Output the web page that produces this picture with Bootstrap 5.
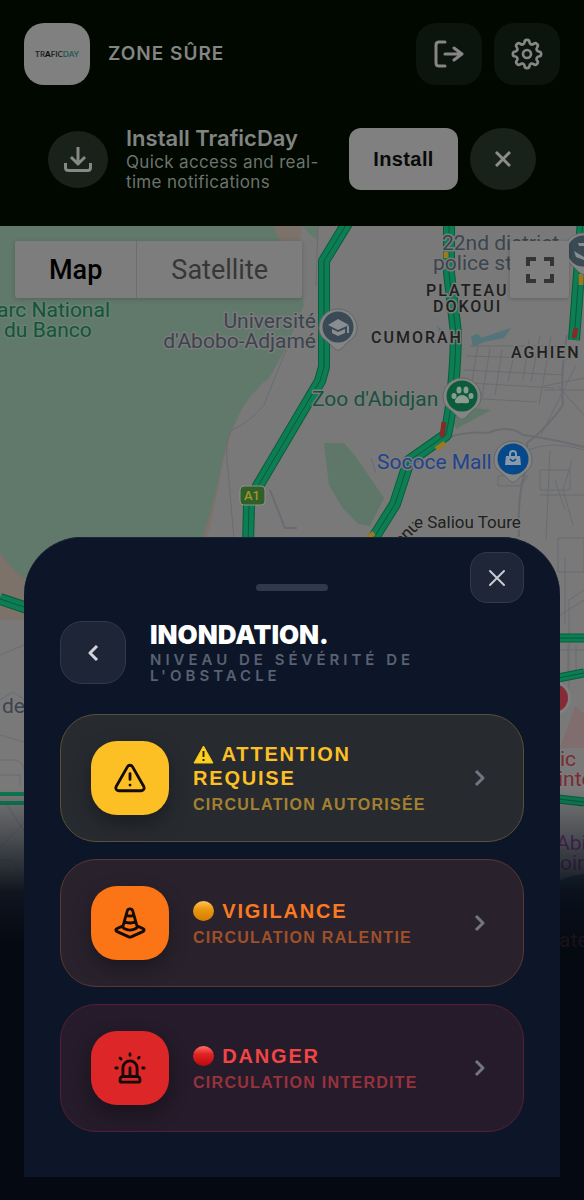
<!DOCTYPE html>
<html lang="fr">
<head>
<meta charset="utf-8">
<meta name="viewport" content="width=device-width, initial-scale=1">
<title>TraficDay</title>
<link href="https://cdn.jsdelivr.net/npm/bootstrap@5.3.0/dist/css/bootstrap.min.css" rel="stylesheet">
<style>
body{background:#050912;font-family:Inter,"Liberation Sans",sans-serif}
button{border:0;padding:0;flex-shrink:0}
svg{display:block;flex-shrink:0}
.stroke-icon{fill:none;stroke:currentColor;stroke-width:2;stroke-linecap:round;stroke-linejoin:round}
.stroke-bold{stroke-width:3}
.stroke-butt{stroke-width:3;stroke-linecap:butt}
.top-area{background:#000800;color:#858585;padding:23px 24px 34px}
.brand-row{gap:18px}
.brand-logo{width:66px;height:62px;border-radius:20px;background:#808080}
.zone-name{font-size:19px;font-weight:600;line-height:24px;letter-spacing:1px}
.top-btns{gap:12px}
.top-btn{width:66px;height:62px;border-radius:20px;background:#0c140e;color:#858685}
.install-row{padding:0 24px;margin-top:41px}
.install-copy{min-width:0;margin:0 18px}
.round-mark{width:60px;height:57px;border-radius:50%;background:#19211b;color:#858885;flex-shrink:0}
.install-title{font-size:22px;font-weight:600;line-height:24px;margin:0 0 2px;color:#828482}
.install-text{font-size:17px;line-height:20px;margin:0;color:#6d736e;letter-spacing:.02em}
.install-btn{width:109px;height:62px;border-radius:12px;background:#808080;color:#080a08;font:bold 20px "Liberation Sans",sans-serif;letter-spacing:.02em}
.dismiss-btn{width:66px;height:62px;margin-left:12px;border-radius:50%;background:#19211b;color:#8b8d8b}
.map-art{inset:0;width:100%;height:100%}
.map-art text{font-family:Roboto,sans-serif;paint-order:stroke;stroke:#7b7b7b;stroke-width:3px;stroke-linejoin:round}
.map-art .on-park text{stroke:#66816e}
.map-art .no-halo{stroke:none}
.map-tools{padding:15px 15px 0}
.map-types{height:57px;background:#7d7d7d;border-radius:2px;box-shadow:0 1px 5px #0003}
.map-types button{background:none;font:400 27px Roboto,sans-serif;color:#373737;padding:0 34px}
.map-types .current{font-weight:500;color:#000;border-right:1px solid #6d6d6d}
.full-btn{width:59px;height:57px;background:#7f7f7f;color:#343434;border-radius:2px;box-shadow:0 1px 4px #0003}
.sheet{margin:0 24px 23px;padding:47px 36px 45px;border-radius:58px 58px 0 0;background:#0c1628;box-shadow:inset 0 1px #1a2435}
.grip{width:72px;height:7px;border-radius:4px;background:#2e394b}
.close-btn{top:15px;right:36px;width:54px;height:51px;border-radius:17px;background:#1e2638;border:1px solid #313a4b;color:#c7cad1}
.sheet-head{gap:24px;margin:30px 0}
.back-btn{width:66px;height:63px;border-radius:22px;background:#1e2537;border:1px solid #303849;color:#d0d3da}
.sheet-title{font-size:26px;font-weight:900;line-height:28px;margin:0 0 3px;color:#fff}
.sheet-sub{font-size:15px;font-weight:600;line-height:16px;letter-spacing:4px;margin:0;color:#596172}
.levels{gap:17px}
.level{border:1px solid;border-radius:36px;padding:26px 32px 26px 30px;gap:24px;font-family:"Liberation Sans",sans-serif;font-weight:700}
.level-icon{width:78px;height:74px;border-radius:26px;color:#140b05;box-shadow:0 8px 20px #0005;flex-shrink:0}
.level-icon svg{stroke-width:2}
.level-name{font-size:20px;line-height:24px;letter-spacing:.09em}
.level-name svg{display:inline-block;vertical-align:-3px;margin-right:1px}
.level-note{font-size:16px;line-height:20px;letter-spacing:.08em;margin-top:5px}
.level>svg{color:#737580}
.caution{background:#272a2f;border-color:#575233}
.caution .level-icon{background:#fcbf24}.caution .level-name{color:#fcbf24}.caution .level-note{color:#a38030}
.vigilance{background:#29222d;border-color:#593831}
.vigilance .level-icon{background:#fb7415}.vigilance .level-name{color:#fb7a20}.vigilance .level-note{color:#9d5029}
.danger{background:#251b2a;border-color:#561f35}
.danger .level-icon{background:#dc2628}.danger .level-name{color:#f24545}.danger .level-note{color:#97323d}
</style>
</head>
<body>
<div class="min-vh-100 d-flex flex-column">
<header class="top-area">
  <div class="brand-row d-flex align-items-center">
    <div class="brand-logo d-flex align-items-center justify-content-center">
      <svg width="50" height="12" viewBox="0 0 50 12" font-family="Lato,sans-serif" font-size="8" font-weight="700"><text x="25" y="9" text-anchor="middle" fill="#222827">TR<tspan fill="#0b0b0b" font-weight="900">A</tspan>FIC<tspan fill="#285951">DAY</tspan></text></svg>
    </div>
    <div class="zone-name">ZONE SÛRE</div>
    <div class="top-btns d-flex ms-auto">
      <button class="top-btn d-flex align-items-center justify-content-center" aria-label="Log out"><svg class="stroke-icon stroke-bold" width="30" height="28" viewBox="0 0 30 28"><path d="M11 2H5Q2 2 2 5V23Q2 26 5 26H11M11 14H28M20 8l8 6-8 6"/></svg></button>
      <button class="top-btn d-flex align-items-center justify-content-center" aria-label="Settings"><svg class="stroke-icon" width="34" height="32" viewBox="-12 -12 24 24"><defs><path id="lobe" d="M-3.060-7.390C-2.300-7.700-1.900-8-1.900-8.700A1.900 1.900 0 0 1 1.900-8.700C1.900-8 2.300-7.700 3.060-7.390"/></defs><use href="#lobe"/><use href="#lobe" transform="rotate(45)"/><use href="#lobe" transform="rotate(90)"/><use href="#lobe" transform="rotate(135)"/><use href="#lobe" transform="rotate(180)"/><use href="#lobe" transform="rotate(225)"/><use href="#lobe" transform="rotate(270)"/><use href="#lobe" transform="rotate(315)"/><circle r="3"/></svg></button>
    </div>
  </div>
  <div class="install-row d-flex align-items-center">
    <div class="round-mark d-flex align-items-center justify-content-center"><svg class="stroke-icon stroke-butt" width="30" height="28" viewBox="0 0 30 28"><path d="M15 2V18M8 12l7 7 7-7M2.500 18V22.500Q2.500 25.500 5.500 25.500H24.500Q27.500 25.500 27.500 22.500V18"/></svg></div>
    <div class="install-copy flex-grow-1"><h2 class="install-title">Install TraficDay</h2><p class="install-text">Quick access and real-time notifications</p></div>
    <button class="install-btn">Install</button>
    <button class="dismiss-btn d-flex align-items-center justify-content-center" aria-label="Dismiss"><svg class="stroke-icon stroke-butt" width="16" height="16" viewBox="0 0 16 16"><path d="M1 1l14 14M15 1L1 15"/></svg></button>
  </div>
</header>
<main class="position-relative flex-grow-1 d-flex flex-column">
  <svg class="map-art position-absolute" viewBox="0 226 584 974" preserveAspectRatio="xMidYMin slice" aria-hidden="true">
    <defs>
      <linearGradient id="fade" x1="0" y1="0" x2="0" y2="1"><stop offset="0" stop-color="#050912" stop-opacity="0"/><stop offset=".3" stop-color="#08101a" stop-opacity=".45"/><stop offset=".6" stop-color="#070c17" stop-opacity=".92"/><stop offset=".9" stop-color="#050912"/></linearGradient>
      <g id="drop"><path d="M0-19a19 19 0 0 1 19 19c0 9-6 11-11 16l-5 5q-3 3-6 0l-5-5C-13 11-19 9-19 0A19 19 0 0 1 0-19z" fill="#838484" stroke="#646565" stroke-width="1"/></g>
    </defs>
    <rect y="226" width="584" height="974" fill="#797979"/>
    <path d="M0 226H302L286 350C265 375 245 395 235 425C222 450 218 500 207 537L190 620H0z" fill="#7c7269"/>
    <path d="M0 226H273Q288 256 300 280L304 305Q288 345 270 377Q240 400 226 445Q215 500 202 540L180 590H40Q10 570 0 552z" fill="#61796b"/>
    <path d="M302 226h16v14l-8-6z" fill="#627b6d"/>
    <path d="M324 443h20l12 14 28 41-14 28-12-2-16-17-13-22zM451 416l10-10 30 4-35 19z" fill="#5f7768"/>
    <path d="M471 337q7-6 10 1l30-10-7 10-20 4-11 5zM436 325l7 6v8z" fill="#54747c"/>
    <g fill="none" stroke="#6a6c72" stroke-width="2">
      <path stroke-width="1" d="M286 350L264 405Q248 424 231 430Q224 442 228 470L234 540"/><path d="M270 490l15 38h12"/>
      <path d="M449 437q20-6 39-4 20-9 35 2 30 4 61 12M567 335q-7 40-4 70-15 22-36 38v24q-10 24-8 70"/>
      <path stroke-width="1" d="M528 450q24-10 56 0M540 495h44M550 450l-4 90M572 460l-9 30 10 35M470 346h105M466 356l105 3M464 370l100 5M470 383l85 5M465 398l72 4M478 345l-9 55M490 348l-8 50M502 350l-7 45M516 346l-8 35M529 340l-6 40M540 336l-9 46M551 337l-12 68M576 365l-35 70M584 378l-40 8M584 390h-40M557 385l27 30M540 470h30v20h-30zM555 480l10 30M498 476h30l-8 10h-22z"/>
      <path stroke-width="1" d="M558 538h26v34h-26zM565 558v65M584 590l-15 10v100M560 615l24-15M560 650h24M568 645v30M576 645v34M371 458l5 15M318 226l-2 60"/>
      <path stroke-width="1" d="M0 655l24-10M0 700l13-8 11 7M0 735l24 7M0 760h16q8 3 8 10M0 775h20v10M7 805l17 26M24 823L0 847M0 860h13l8 20"/>
    </g>
    <path d="M575 706l9 8v34h-24z" fill="#806d6d"/>
    <path d="M560 880q12-5 24-6v100h-24z" fill="#314e5b"/>
    <g fill="none" stroke-linejoin="round">
      <g stroke="#075d3c" stroke-width="12"><path d="M349 220L324 261V367L320 381 258 486 249 505 248 545"/><path d="M449 220v53l7 60q-1 60-10 102L409 461l-14 43-25 40"/><path d="M583 220l-9 120"/><path d="M0 599l30 10"/><path d="M558 638h26M558 678l26-5M558 799l26 3" stroke-width="9"/></g>
      <g stroke="#0d7e54" stroke-width="10"><path d="M349 220L324 261V367L320 381 258 486 249 505 248 545"/><path d="M449 220v53l7 60q-1 60-10 102L409 461l-14 43-25 40"/><path d="M583 220l-9 120"/><path d="M0 599l30 10"/><path d="M558 638h26M558 678l26-5M558 799l26 3" stroke-width="7"/></g>
      <path d="M349 220L324 261V367L320 381 258 486 249 505 248 545M449 220v53l7 60q-1 60-10 102L409 461l-14 43-25 40M583 220l-9 120M0 599l30 10M558 638h26M558 678l26-5M558 799l26 3" stroke="#075a3d" stroke-width="1"/>
      <path d="M0 794h30M0 803h30" stroke="#0d7850" stroke-width="4"/>
      <path d="M444 422l-2 15M576 328l-2 10" stroke="#842b29" stroke-width="5"/><path d="M436 449l9-6M446 252v6M581 274v11M368 538l6-5" stroke="#9a7920" stroke-width="5"/>
    </g>
    <rect x="240" y="486" width="25" height="19" rx="4" fill="#315f27" stroke="#8c938a"/>
    <text class="no-halo" x="252" y="500" text-anchor="middle" font-size="13" font-weight="500" fill="#a2962e">A1</text>
    <g class="on-park" fill="#17523d" font-size="21"><text x="110" y="317" text-anchor="end">Parc National</text><text x="4" y="337">du Banco</text></g>
    <text x="312" y="406" font-size="21" fill="#17523d">Zoo d'Abidjan</text>
    <g fill="#3b444f" font-size="21"><text x="316" y="328" text-anchor="end">Université</text><text x="316" y="348" text-anchor="end">d'Abobo-Adjamé</text><text x="442" y="250">22nd district</text><text x="433" y="270">police station</text><text x="2" y="713">de</text></g>
    <text x="377" y="469" font-size="21" fill="#22438b">Sococe Mall</text>
    <g fill="#202020" font-size="16" font-weight="500" letter-spacing="2"><text x="426" y="296">PLATEAU</text><text x="433" y="312">DOKOUI</text><text x="371" y="343">CUMORAH</text><text x="511" y="358">AGHIEN</text></g>
    <g fill="#202020" font-size="17"><text class="no-halo" transform="translate(401 547) rotate(-46)">enu</text><text x="414" y="528">e Saliou Toure</text></g>
    <use href="#drop" x="338" y="328"/><circle cx="338" cy="327" r="15.500" fill="#394a55"/><path d="M328 325l10-6 11 6-11 5zM332 329v4l6 3 7-3v-4l-7 3zM347 326h2v7h-2z" fill="#8a8d8f"/>
    <use href="#drop" x="462" y="397"/><circle cx="462" cy="396" r="15.500" fill="#0a5c3a"/><g fill="#8c9b92"><ellipse cx="454" cy="396" rx="2.500" ry="3"/><ellipse cx="459" cy="390" rx="2.500" ry="3.500"/><ellipse cx="466" cy="390" rx="2.500" ry="3.500"/><ellipse cx="471" cy="396" rx="2.500" ry="3"/><path d="M462 395c4 0 8 4 7 7-1 2-4 1-7 1s-6 1-7-1 3-7 7-7z"/></g>
    <use href="#drop" x="513" y="460"/><circle cx="513" cy="459" r="15.500" fill="#06498a"/><path d="M506 456h14l1 9h-16z" fill="#899aad"/><path d="M510 457v-3a3 3 0 0 1 6 0v3" fill="none" stroke="#899aad" stroke-width="2"/><path d="M510 459q3 4 6 0" fill="none" stroke="#06498a" stroke-width="1.500"/>
    <use href="#drop" x="583" y="252"/><circle cx="583" cy="251" r="15.500" fill="#394a55"/><path d="M578 243h8v3h-7zM574 251l10 6v3l-8-3z" fill="#8a8d8f"/>
    <circle cx="554" cy="698" r="17" fill="#7f8080"/><circle cx="554" cy="698" r="14" fill="#862b35"/>
    <g font-size="21"><text x="560" y="766" fill="#7a2a30">ic</text><text x="558" y="786" fill="#7a2a30">inter</text><text x="556" y="850" fill="#6b2c70">Abidjan</text><text x="560" y="870" fill="#6b2c70">oint</text></g>
    <rect y="790" width="584" height="170" fill="url(#fade)"/><rect y="959" width="584" height="800" fill="#050912"/>
    <text class="no-halo" x="559" y="947" font-size="21" fill="#1a1219">ate</text>
  </svg>
  <div class="map-tools position-relative d-flex justify-content-between">
    <div class="map-types d-flex"><button class="current">Map</button><button>Satellite</button></div>
    <button class="full-btn d-flex align-items-center justify-content-center" aria-label="Full screen"><svg width="28" height="26" viewBox="0 0 28 26" fill="none" stroke="currentColor" stroke-width="4"><path d="M2 9V2H10M18 2H26V9M26 17V24H18M10 24H2V17"/></svg></button>
  </div>
  <section class="sheet position-relative mt-auto" role="dialog" aria-labelledby="sheet-title">
    <div class="grip mx-auto"></div>
    <button class="close-btn position-absolute d-flex align-items-center justify-content-center" aria-label="Fermer"><svg class="stroke-icon" width="18" height="18" viewBox="0 0 18 18"><path d="M2 2l14 14M16 2L2 16"/></svg></button>
    <div class="sheet-head d-flex align-items-center">
      <button class="back-btn d-flex align-items-center justify-content-center" aria-label="Retour"><svg class="stroke-icon stroke-butt" width="12" height="16" viewBox="0 0 12 16"><path d="M10 1L3 8l7 7"/></svg></button>
      <div><h1 class="sheet-title" id="sheet-title">INONDATION.</h1><p class="sheet-sub">NIVEAU DE SÉVÉRITÉ DE L'OBSTACLE</p></div>
    </div>
    <div class="levels d-flex flex-column">
      <button class="level caution d-flex align-items-center text-start">
        <span class="level-icon d-flex align-items-center justify-content-center"><svg class="stroke-icon" width="36" height="34" viewBox="0 0 24 24"><path d="m21.730 18-8-14a2 2 0 0 0-3.480 0l-8 14A2 2 0 0 0 4 21h16a2 2 0 0 0 1.730-3M12 9v4M12 17h.01"/></svg></span>
        <span class="flex-grow-1"><span class="level-name d-block"><svg width="21" height="19" viewBox="0 0 21 19"><path d="M10.500 1L20 18H1z" fill="#ffd020" stroke="#f5c51b" stroke-linejoin="round"/><path d="M10.500 6v6M10.500 14v2" stroke="#332800" stroke-width="2"/></svg> ATTENTION REQUISE</span><span class="level-note d-block">CIRCULATION AUTORISÉE</span></span>
        <svg class="stroke-icon stroke-butt" width="24" height="24" viewBox="0 0 24 24"><path d="M9 5l7 7-7 7"/></svg>
      </button>
      <button class="level vigilance d-flex align-items-center text-start">
        <span class="level-icon d-flex align-items-center justify-content-center"><svg class="stroke-icon" width="36" height="34" viewBox="0 0 24 24"><path d="M16.050 10.966a5 2.500 0 0 1-8.100 0M16.923 14.049l4.480 2.040a1 1 0 0 1 .001 1.831l-8.574 3.900a2 2 0 0 1-1.660 0l-8.574-3.910a1 1 0 0 1 0-1.830l4.484-2.040M16.949 14.140a5 2.500 0 1 1-9.900 0L10.063 3.500a2 2 0 0 1 3.874 0zM9.194 6.570a5 2.500 0 0 0 5.610 0"/></svg></span>
        <span class="flex-grow-1"><span class="level-name d-block"><svg width="21" height="20" viewBox="0 0 21 20"><defs><linearGradient id="amber" x2="0" y2="1"><stop stop-color="#ffc35b"/><stop offset=".4" stop-color="#eb9910"/><stop offset="1" stop-color="#d57b00"/></linearGradient></defs><ellipse cx="10.500" cy="10" rx="10.500" ry="10" fill="url(#amber)"/></svg> VIGILANCE</span><span class="level-note d-block">CIRCULATION RALENTIE</span></span>
        <svg class="stroke-icon stroke-butt" width="24" height="24" viewBox="0 0 24 24"><path d="M9 5l7 7-7 7"/></svg>
      </button>
      <button class="level danger d-flex align-items-center text-start">
        <span class="level-icon d-flex align-items-center justify-content-center"><svg class="stroke-icon" width="36" height="34" viewBox="0 0 24 24"><path d="M7 18v-6a5 5 0 1 1 10 0v6M5 21a1 1 0 0 0 1 1h12a1 1 0 0 0 1-1v-1a2 2 0 0 0-2-2H7a2 2 0 0 0-2 2zM21 12h1M18.500 4.500 18 5M2 12h1M12 2v1M4.929 4.929l.707.707M12 12v6"/></svg></span>
        <span class="flex-grow-1"><span class="level-name d-block"><svg width="21" height="20" viewBox="0 0 21 20"><defs><linearGradient id="ruby" x2="0" y2="1"><stop stop-color="#ff7065"/><stop offset=".4" stop-color="#df2524"/><stop offset="1" stop-color="#bd080d"/></linearGradient></defs><ellipse cx="10.500" cy="10" rx="10.500" ry="10" fill="url(#ruby)"/></svg> DANGER</span><span class="level-note d-block">CIRCULATION INTERDITE</span></span>
        <svg class="stroke-icon stroke-butt" width="24" height="24" viewBox="0 0 24 24"><path d="M9 5l7 7-7 7"/></svg>
      </button>
    </div>
  </section>
</main>
</div>
<script src="https://cdn.jsdelivr.net/npm/bootstrap@5.3.0/dist/js/bootstrap.bundle.min.js"></script>
</body>
</html>
